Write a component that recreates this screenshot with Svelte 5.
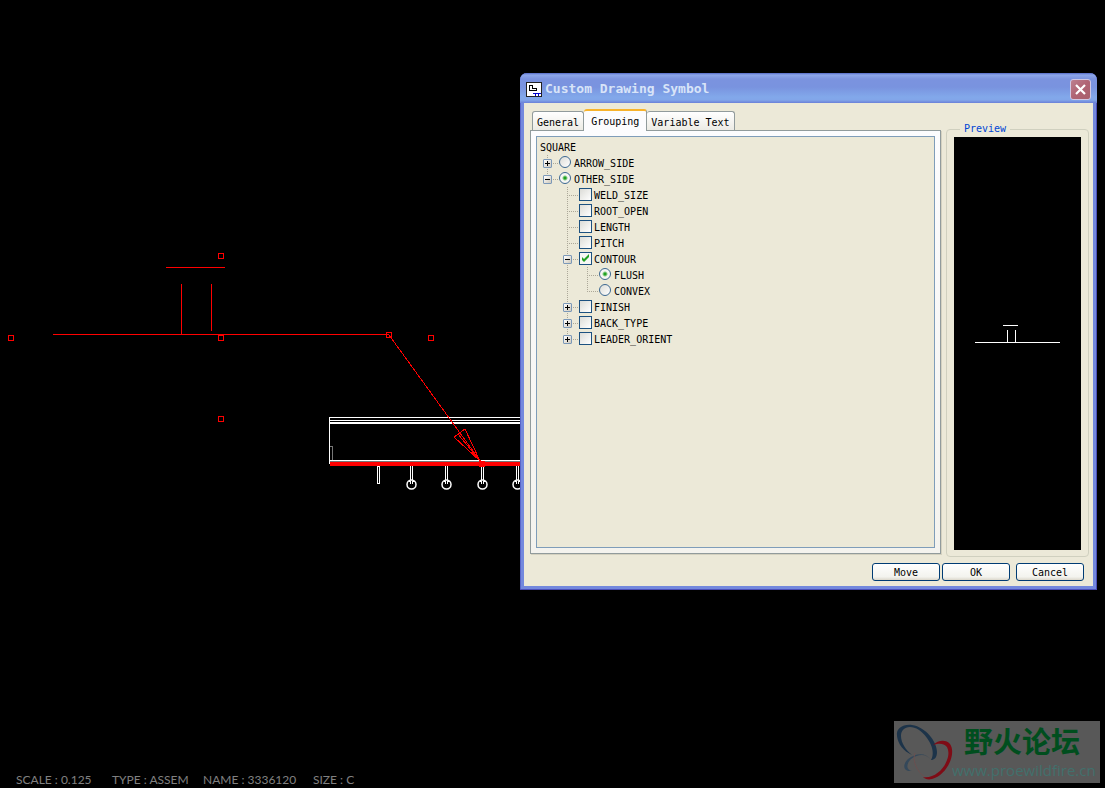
<script lang="ts">
	type Node = {
		label: string;
		kind: 'radio' | 'checkbox';
		group?: string;
		checked?: boolean;
		open?: boolean;
		expandable?: boolean;
		children?: Node[];
	};

	let tree = $state<Node[]>([
		{ label: 'ARROW_SIDE', kind: 'radio', group: 'side', expandable: true },
		{
			label: 'OTHER_SIDE', kind: 'radio', group: 'side', checked: true, expandable: true, open: true,
			children: [
				{ label: 'WELD_SIZE', kind: 'checkbox' },
				{ label: 'ROOT_OPEN', kind: 'checkbox' },
				{ label: 'LENGTH', kind: 'checkbox' },
				{ label: 'PITCH', kind: 'checkbox' },
				{
					label: 'CONTOUR', kind: 'checkbox', checked: true, expandable: true, open: true,
					children: [
						{ label: 'FLUSH', kind: 'radio', group: 'contour', checked: true },
						{ label: 'CONVEX', kind: 'radio', group: 'contour' },
					],
				},
				{ label: 'FINISH', kind: 'checkbox', expandable: true },
				{ label: 'BACK_TYPE', kind: 'checkbox', expandable: true },
				{ label: 'LEADER_ORIENT', kind: 'checkbox', expandable: true },
			],
		},
	]);

	const tabs = ['General', 'Grouping', 'Variable Text'];
	let activeTab = $state('Grouping');

	const info = ['SCALE : 0.125', 'TYPE : ASSEM', 'NAME : 3336120', 'SIZE : C'];

	// Selection handles around the symbol
	const handles = [[218, 253], [218, 335], [218, 416], [8, 335], [428, 335], [386, 332]];
	const rollers = [411, 446, 482, 517];
</script>

{#snippet branch(nodes: Node[])}
	<ul>
		{#each nodes as node}
			<li>
				<div class="row">
					<span class="twig">
						{#if node.expandable}
							<button class="expander" aria-label="Toggle {node.label}" onclick={() => (node.open = !node.open)}>
								<svg width="7" height="7" shape-rendering="crispEdges">
									<path d={node.open ? 'M1 3h5v1H1z' : 'M1 3h5v1H1z M3 1h1v5H3z'} />
								</svg>
							</button>
						{/if}
					</span>
					<label>
						<input type={node.kind} name={node.group ?? node.label} checked={node.checked} />
						<span>{node.label}</span>
					</label>
				</div>
				{#if node.open && node.children}
					{@render branch(node.children)}
				{/if}
			</li>
		{/each}
	</ul>
{/snippet}

<main class="desktop">
	<svg class="drawing" shape-rendering="crispEdges" fill="none" aria-hidden="true">
		<!-- beam -->
		<g fill="#fff">
			<rect x="329" y="417" width="300" height="1" />
			<rect x="329" y="420" width="300" height="1" />
			<rect x="329" y="422" width="300" height="2" />
			<rect x="329" y="417" width="1" height="47" />
			<rect x="329" y="460" width="300" height="1" />
		</g>
		<path d="M330 446.5h2.5V460" stroke="#777" />
		<rect x="330" y="461" width="300" height="1" fill="#777" />
		<rect x="330" y="462" width="300" height="4" fill="#f00" />

		<!-- pins and rollers -->
		<path d="M377.5 466.5h2v17h-2z" stroke="#fff" />
		{#each rollers as x}
			<path d="M{x - 0.5} 466v14 M{x + 1.5} 466v14" stroke="#fff" />
			<circle cx={x + 0.5} cy="484.5" r="4.5" stroke="#fff" stroke-width="1.5" shape-rendering="auto" />
			<path d="M{x - 2.5} 481.5h2v2 M{x + 3.5} 481.5h-2v2" stroke="#fff" />
		{/each}

		<!-- weld symbol and leader -->
		<g stroke="#f00">
			<path d="M166 267.5h59 M181.5 284v50 M211.5 284v47 M53 334.5h336" />
			<path d="M389 335L481 462 M480 461L454 437L465 429L480 461 M458 434L480 461" />
			{#each handles as [x, y]}
				<rect x={x + 0.5} y={y + 0.5} width="5" height="5" />
			{/each}
		</g>
		<rect x="479" y="461" width="6" height="6" fill="#f00" />
	</svg>

	<section class="dialog" aria-labelledby="dialog-title">
		<header>
			<svg class="app-icon" width="16" height="15" shape-rendering="crispEdges" aria-hidden="true">
				<rect x="0.5" y="0.5" width="15" height="14" fill="#fff" stroke="#222" />
				<path d="M3.5 3v5.5h7v-2h-4v-3h-3" fill="none" stroke="#000" />
				<path d="M7 11.5h8 M9.5 12v2 M12.5 12v2" stroke="#00c" />
			</svg>
			<h1 id="dialog-title">Custom Drawing Symbol</h1>
			<button class="close" aria-label="Close">
				<svg width="11" height="11" viewBox="0 0 11 11">
					<path d="M1 1l9 9M10 1l-9 9" stroke="#fff" stroke-width="2.2" />
				</svg>
			</button>
		</header>

		<div class="body">
			<div class="columns">
				<div class="pages">
					<div class="tabs" role="tablist">
						{#each tabs as tab}
							<button role="tab" class:active={tab === activeTab} aria-selected={tab === activeTab} onclick={() => (activeTab = tab)}>{tab}</button>
						{/each}
					</div>
					<div class="panel">
						<div class="tree">
							<div class="root">SQUARE</div>
							{@render branch(tree)}
						</div>
					</div>
				</div>

				<fieldset>
					<legend>Preview</legend>
					<svg class="preview" viewBox="0 0 127 413" shape-rendering="crispEdges">
						<rect width="127" height="413" />
						<path d="M49 188.5h15 M53.5 193v12 M61.5 193v12 M21 205.5h85" stroke="#fff" />
					</svg>
				</fieldset>
			</div>

			<footer>
				<button>Move</button>
				<button>OK</button>
				<button class="cancel">Cancel</button>
			</footer>
		</div>
	</section>

	<div class="info">
		{#each info as item}
			<span>{item}</span>
		{/each}
	</div>

	<div class="watermark">
		<svg width="60" height="62" viewBox="0 0 60 62" aria-hidden="true">
			<path fill="#1c3349" fill-rule="evenodd" d="M3 15C2 7 9 3 18 4C32 6 43 21 43 31C43 37 40 39 37 39C42 31 36 17 25 9C15 3 7 7 7 15C7 22 12 29 18 34C9 30 4 23 3 15z" />
			<path fill="#7e0c16" d="M39 24C44 19 52 18 56 23C63 33 52 55 38 58C34 59 31 58 29 56C40 58 51 48 54 36C56 26 51 20 39 24z" />
			<path fill="#34485a" d="M37 39C32 31 22 32 14 38C8 44 9 51 18 50C12 49 12 43 17 38C24 33 32 32 37 39z" />
			<path fill="none" stroke="#6a5050" d="M21 32C18 40 23 51 31 56" />
		</svg>
		<div class="brand">
			<strong lang="zh-CN">野火论坛</strong>
			<span>www.proewildfire.cn</span>
		</div>
	</div>
</main>

<style>
	:global(body) {
		margin: 0;
		background: #000;
	}

	.desktop {
		position: relative;
		display: flex;
		flex-direction: column;
		justify-content: flex-end;
		min-height: 100vh;
		overflow: hidden;
		font-family: 'DejaVu Sans Mono', 'Liberation Mono', monospace;
		font-size: 10px;
		color: #000;
	}

	button {
		font: inherit;
		color: inherit;
		padding: 0;
	}

	svg {
		display: block;
	}

	.drawing {
		position: absolute;
		inset: 0;
		width: 100%;
		height: 100%;
	}

	/* dialog window */
	.dialog {
		position: absolute;
		left: 520px;
		top: 73px;
		width: 577px;
		box-sizing: border-box;
		border-radius: 7px 7px 0 0;
		background: #7388dd;
		padding: 0 4px 4px;
		box-shadow: inset -1px -1px #4c4fb8, inset 1px 0 #5a67c9;
	}

	header {
		display: flex;
		align-items: center;
		height: 30px;
		margin: 0 -4px;
		padding: 2px 6px 0;
		box-sizing: border-box;
		border-radius: 7px 7px 0 0;
		background: linear-gradient(#5468c4 0, #8da7ea 2px, #7b93df 6px, #7993df 14px, #82a8ea 24px, #82a6e9 27px, #6a80d8 30px);
	}

	h1 {
		flex: 1;
		margin: 0 0 0 3px;
		font-size: 13px;
		line-height: 18px;
		font-weight: bold;
		color: #d8e4f8;
	}

	.close {
		display: flex;
		align-items: center;
		justify-content: center;
		width: 21px;
		height: 21px;
		border: 1px solid #d0c8e4;
		border-radius: 3px;
		background: linear-gradient(135deg, #bd8090, #b06474 50%, #a8606c);
	}

	.body {
		background: #ece9d8;
		padding: 6px 4px 5px 6px;
	}

	.columns {
		display: flex;
		gap: 5px;
	}

	.pages {
		flex: 1;
		display: flex;
		flex-direction: column;
		padding-bottom: 3px;
	}

	.tabs {
		display: flex;
		align-items: flex-end;
		height: 21px;
		padding-left: 2px;
	}

	.tabs button {
		height: 19px;
		padding: 2px 4px 0;
		border: 1px solid #919b9c;
		border-bottom: 0;
		border-radius: 3px 3px 0 0;
		background: linear-gradient(#fff, #ecebe4);
	}

	.tabs button + button {
		border-left: 0;
	}

	.tabs .active {
		height: 22px;
		margin-bottom: -1px;
		padding: 0 7px;
		border-top: 2px solid #f8b32c;
		border-right: 1px solid #919b9c;
		background: #fcfcfe;
		z-index: 1;
	}

	.panel {
		flex: 1;
		display: flex;
		padding: 5px;
		border: 1px solid #919b9c;
		background: linear-gradient(#fcfcfe, #f4f3ee);
		box-shadow: 1px 1px #d4d1c0;
	}

	.tree {
		flex: 1;
		padding: 2px 3px;
		border: 1px solid #7f9db9;
		background: #ece9d8;
		line-height: 16px;
	}

	ul {
		list-style: none;
		margin: 0;
		padding: 0 0 0 20px;
	}

	.tree > ul {
		padding-left: 3px;
	}

	li {
		background: repeating-linear-gradient(#aca899 0 1px, transparent 1px 2px) 4px 0 / 1px 100% no-repeat;
	}

	li:last-child {
		background-size: 1px 8px;
	}

	.root,
	.row {
		height: 16px;
	}

	.row {
		display: flex;
	}

	.root,
	label span {
		line-height: 18px;
	}

	.twig {
		width: 16px;
		padding-top: 4px;
		box-sizing: border-box;
		background: repeating-linear-gradient(90deg, #aca899 0 1px, transparent 1px 2px) 4px 8px / 11px 1px no-repeat;
	}

	.expander {
		display: block;
		width: 9px;
		height: 9px;
		border: 1px solid #7b98b8;
		border-radius: 1px;
		background: linear-gradient(135deg, #fff, #d0cabc);
	}

	label {
		display: flex;
		gap: 2px;
	}

	input {
		appearance: none;
		flex: none;
		width: 13px;
		height: 13px;
		margin: 1px 0 0;
		border: 1px solid #1c5180;
		background: linear-gradient(135deg, #dcdcd7, #fff);
	}

	input[type='radio'] {
		width: 12px;
		height: 12px;
		margin-right: 1px;
		border: 1px solid #3b6791;
		border-radius: 50%;
	}

	input[type='radio']:checked {
		background: radial-gradient(circle, #21a121 0 1px, #8fd08f 2px, #f6f6f4 3px);
	}

	input[type='checkbox']:checked {
		background: url("data:image/svg+xml,%3Csvg xmlns='http://www.w3.org/2000/svg' viewBox='0 0 11 11'%3E%3Cpath d='M2 4v3l2 2 5-5V1L4 6z' fill='%2321a121'/%3E%3C/svg%3E") #f6f6f4;
	}

	fieldset {
		align-self: flex-start;
		min-width: 0;
		margin: 14px 0 0;
		padding: 2px 7px 6px;
		border: 1px solid #d0d0bf;
		border-radius: 4px;
	}

	legend {
		margin-left: 6px;
		padding: 0 4px;
		line-height: 12px;
		color: #0046d5;
	}

	.preview {
		width: 127px;
		height: 413px;
	}

	footer {
		display: flex;
		justify-content: flex-end;
		gap: 2px;
		margin-top: 6px;
		padding-right: 5px;
	}

	footer button {
		width: 68px;
		height: 18px;
		border: 1px solid #003c74;
		border-radius: 3px;
		background: linear-gradient(#fff, #f3f3ee 80%, #dcd8cc);
	}

	.cancel {
		margin-left: 4px;
	}

	.info {
		display: grid;
		grid-template-columns: 96px 91px 110px auto;
		padding-left: 16px;
		font-family: Lato, sans-serif;
		font-size: 12px;
		line-height: 16px;
		color: #808080;
	}

	.watermark {
		position: absolute;
		right: 5px;
		bottom: 5px;
		display: flex;
		width: 206px;
		height: 62px;
		background: #585858;
	}

	.brand {
		display: flex;
		flex-direction: column;
		margin-left: -2px;
		font-family: 'Open Sans', sans-serif;
		font-size: 15px;
		line-height: 20px;
		color: #42706c;
	}

	.brand strong {
		margin-left: 12px;
		font-family: 'Noto Sans CJK SC', sans-serif;
		font-size: 29px;
		line-height: 39px;
		color: #004e1e;
	}
</style>
